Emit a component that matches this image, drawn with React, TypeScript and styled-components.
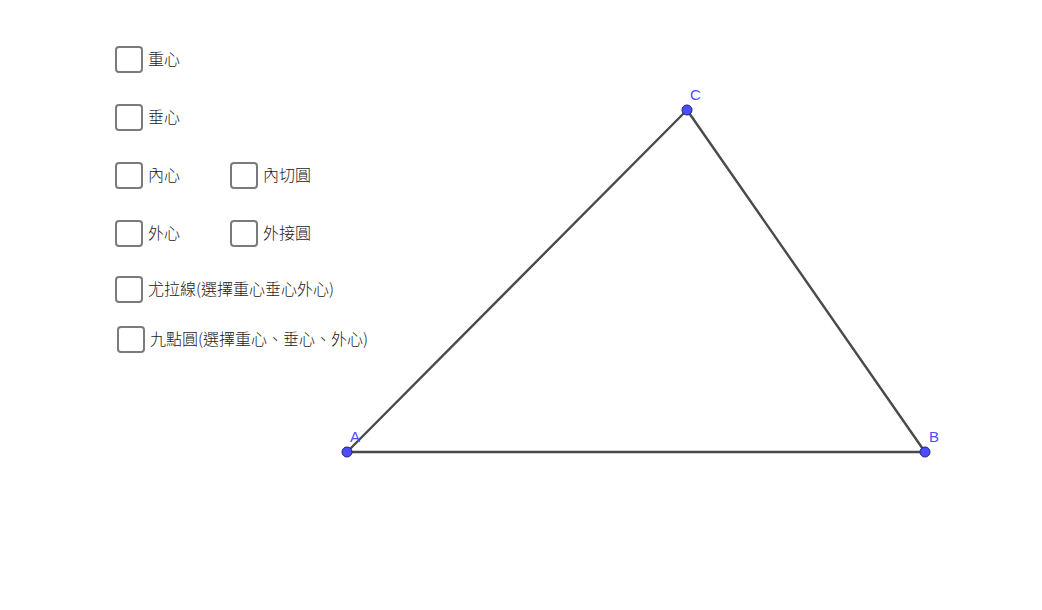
import React from "react";
import styled, { createGlobalStyle } from "styled-components";

const Global = createGlobalStyle`
  html, body { margin: 0; padding: 0; background: #ffffff; }
  body { font-family: "Noto Sans CJK TC", "Noto Sans", sans-serif; }
`;

const Page = styled.div`
  position: relative;
  width: 1042px;
  height: 610px;
  background: #ffffff;
  overflow: hidden;
`;

const Drawing = styled.svg`
  position: absolute;
  left: 0;
  top: 0;
  width: 1042px;
  height: 610px;
`;

const Panel = styled.div`
  position: relative;
  display: flex;
  flex-direction: column;
  padding: 46px 0 0 115px;
`;

const Row = styled.div<{ $mt: number; $ml?: number }>`
  display: grid;
  grid-template-columns: 115px auto;
  align-items: center;
  margin-top: ${(p) => p.$mt}px;
  margin-left: ${(p) => p.$ml ?? 0}px;
  height: 27px;
`;

const Item = styled.label`
  display: flex;
  align-items: center;
  gap: 5px;
  white-space: nowrap;
  cursor: pointer;
`;

const Box = styled.span`
  box-sizing: border-box;
  width: 28px;
  height: 27px;
  border: 2px solid #7b7b7b;
  border-radius: 4px;
  background: #ffffff;
  flex: none;
`;

const Text = styled.span`
  font-family: "Noto Sans CJK TC", "Noto Sans", sans-serif;
  font-size: 16px;
  font-weight: 300;
  color: #1a1a1a;
  line-height: 27px;
  margin-top: -2px;
`;

const rows: { mt: number; ml?: number; items: string[] }[] = [
  { mt: 0, items: ["重心"] },
  { mt: 31, items: ["垂心"] },
  { mt: 31, items: ["內心", "內切圓"] },
  { mt: 31, items: ["外心", "外接圓"] },
  { mt: 29, items: ["尤拉線(選擇重心垂心外心)"] },
  { mt: 23, ml: 2, items: ["九點圓(選擇重心、垂心、外心)"] },
];

const A = { x: 347, y: 452 };
const B = { x: 925, y: 452 };
const C = { x: 687, y: 110 };

export default function App() {
  return (
    <Page>
      <Global />
      <Drawing viewBox="0 0 1042 610">
        <polygon
          points={`${A.x},${A.y} ${B.x},${B.y} ${C.x},${C.y}`}
          fill="none"
          stroke="#4a4a4a"
          strokeWidth={2.4}
          strokeLinejoin="round"
        />
        {[A, B, C].map((p, i) => (
          <circle key={i} cx={p.x} cy={p.y} r={5} fill="#4d4dff" stroke="#1f1f7a" strokeWidth={1} />
        ))}
        <g fill="#4d4dff" fontFamily="'Liberation Sans', Arial, sans-serif" fontSize={15}>
          <text x={350} y={442}>A</text>
          <text x={929} y={442}>B</text>
          <text x={690} y={100}>C</text>
        </g>
      </Drawing>
      <Panel>
        {rows.map((r, i) => (
          <Row key={i} $mt={r.mt} $ml={r.ml}>
            {r.items.map((t) => (
              <Item key={t}>
                <Box />
                <Text>{t}</Text>
              </Item>
            ))}
          </Row>
        ))}
      </Panel>
    </Page>
  );
}
